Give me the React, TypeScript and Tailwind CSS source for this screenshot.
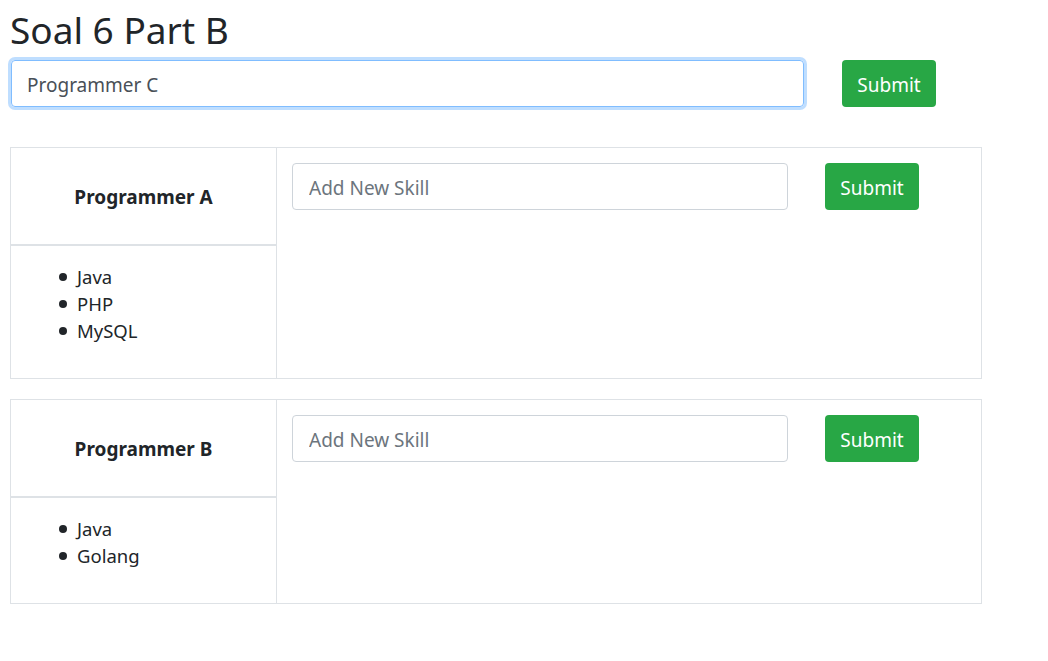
import { useState } from "react";

interface Programmer {
  name: string;
  skills: string[];
}

const initial: Programmer[] = [
  { name: "Programmer A", skills: ["Java", "PHP", "MySQL"] },
  { name: "Programmer B", skills: ["Java", "Golang"] },
];

function SubmitButton() {
  return (
    <button className="h-[47px] w-[94px] shrink-0 rounded-[4px] bg-[#28a745] pt-[3px] text-[19px] text-white">
      Submit
    </button>
  );
}

function ProgrammerCard({ item }: { item: Programmer }) {
  const [skill, setSkill] = useState("");

  return (
    <div className="flex w-[972px] border border-[#dee2e6]">
      <div className="flex w-[266px] shrink-0 flex-col border-r border-[#dee2e6]">
        <div className="flex h-[98px] items-center justify-center border-b-2 border-[#dee2e6] pt-[2px] text-[19px] font-bold">
          {item.name}
        </div>
        <ul className="pt-[17px] pb-[34px] pl-[48px] text-[18.5px] leading-[27px]">
          {item.skills.map((s) => (
            <li key={s} className="flex items-center">
              <span className="mr-[10px] h-[8px] w-[8px] rounded-full bg-[#212529]" />
              {s}
            </li>
          ))}
        </ul>
      </div>
      <div className="flex flex-1 items-start gap-[37px] p-[15px]">
        <input
          value={skill}
          onChange={(e) => setSkill(e.target.value)}
          placeholder="Add New Skill"
          className="h-[47px] w-[496px] rounded-[4px] border border-[#ced4da] px-[16px] pt-[3px] text-[19px] text-[#495057] outline-none placeholder:text-[#6c757d]"
        />
        <SubmitButton />
      </div>
    </div>
  );
}

export default function App() {
  const [name, setName] = useState("Programmer C");

  return (
    <div className="min-h-screen bg-white px-[10px] text-[#212529] [font-family:'Noto_Sans',sans-serif]">
      <h1 className="pt-[4px] text-[37px] leading-[52px]">Soal 6 Part B</h1>
      <div className="mt-[4px] flex items-center gap-[38px] pl-[1px]">
        <input
          value={name}
          onChange={(e) => setName(e.target.value)}
          className="h-[47px] w-[793px] rounded-[4px] border border-[#80bdff] px-[15px] pt-[3px] text-[19px] text-[#495057] shadow-[0_0_0_3px_rgba(0,123,255,0.25)] outline-none"
        />
        <SubmitButton />
      </div>
      <div className="mt-[40px] flex flex-col gap-[20px]">
        {initial.map((p) => (
          <ProgrammerCard key={p.name} item={p} />
        ))}
      </div>
    </div>
  );
}
